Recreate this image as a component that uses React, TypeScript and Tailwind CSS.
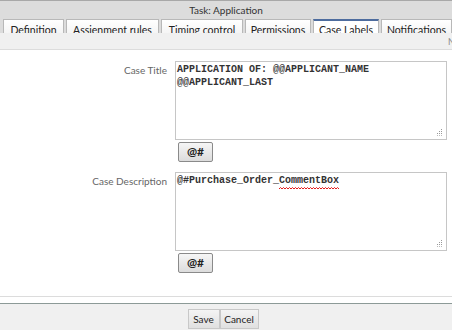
import React from "react";

const ui = { fontFamily: 'Lato, "Open Sans", sans-serif' };
const mono = { fontFamily: '"Liberation Mono", "Courier New", monospace' };

function Grip() {
  return (
    <svg className="absolute right-[3px] bottom-[3px]" width="7" height="7" viewBox="0 0 7 7">
      <rect x="5" y="0" width="1" height="1" fill="#999" />
      <rect x="3" y="2" width="1" height="1" fill="#999" />
      <rect x="5" y="2" width="1" height="1" fill="#999" />
      <rect x="1" y="4" width="1" height="1" fill="#999" />
      <rect x="3" y="4" width="1" height="1" fill="#999" />
      <rect x="5" y="4" width="1" height="1" fill="#999" />
      <rect x="1" y="6" width="1" height="1" fill="#bbb" />
      <rect x="3" y="6" width="1" height="1" fill="#bbb" />
      <rect x="5" y="6" width="1" height="1" fill="#bbb" />
    </svg>
  );
}

function Squiggle() {
  return (
    <svg className="absolute left-[103px] top-[14px]" width="60" height="3" viewBox="0 0 60 3">
      <polyline
        points="0,2 1.5,0.5 3,2 4.5,0.5 6,2 7.5,0.5 9,2 10.5,0.5 12,2 13.5,0.5 15,2 16.5,0.5 18,2 19.5,0.5 21,2 22.5,0.5 24,2 25.5,0.5 27,2 28.5,0.5 30,2 31.5,0.5 33,2 34.5,0.5 36,2 37.5,0.5 39,2 40.5,0.5 42,2 43.5,0.5 45,2 46.5,0.5 48,2 49.5,0.5 51,2 52.5,0.5 54,2 55.5,0.5 57,2 58.5,0.5 60,2"
        fill="none"
        stroke="#e00000"
        strokeWidth="0.9"
      />
    </svg>
  );
}

function AtButton() {
  return (
    <button
      className="ml-[3px] mt-[2px] w-[35px] h-[20px] rounded-[2px] border border-[#8a8a8a] bg-gradient-to-b from-[#f6f6f6] to-[#dcdcdc] text-[12px] font-bold text-[#222] leading-none flex items-center justify-center"
      style={ui}
    >
      @#
    </button>
  );
}

const tabs = [
  { label: "Definition", w: "w-[61px]" },
  { label: "Assienment rules", w: "w-[93px]" },
  { label: "Timing control", w: "w-[82px]" },
  { label: "Permissions", w: "w-[66px]" },
  { label: "Case Labels", w: "w-[66px]", active: true },
  { label: "Notifications", w: "w-[71px]" },
];

export default function App() {
  return (
    <div className="w-[452px] h-[330px] bg-white flex flex-col overflow-hidden" style={ui}>
      {/* Title + tabs */}
      <div className="bg-[#dcdcdc] border-t border-[#a8a8a8]">
        <div className="h-[18px] flex items-center justify-center text-[10px] text-[#333]">
          Task: Application
        </div>
        <div className="h-[14px] overflow-hidden flex gap-[2px] pl-[3px]">
          {tabs.map((t) => (
            <div
              key={t.label}
              className={`${t.w} shrink-0 h-[20px] border-x border-[#b8b8b8] ${
                t.active
                  ? "border-t-2 border-t-[#4d6c9e] bg-white pt-[3px]"
                  : "border-t border-t-[#b8b8b8] bg-gradient-to-b from-white to-[#f0f0f0] pt-[4px]"
              } text-center text-[10.5px] leading-[13px] text-[#222] whitespace-nowrap`}
            >
              {t.label}
            </div>
          ))}
        </div>
      </div>
      <div className="relative h-[17px] bg-[#f0f0f0] border-b border-[#dcdcdc]">
        <span className="absolute left-[448px] top-[2px] text-[9px] text-[#888]">N</span>
      </div>

      {/* Content */}
      <div className="flex-1 flex flex-col pt-[11px]">
        <div className="flex">
          <div className="w-[167px] shrink-0 text-right text-[10px] text-[#666] pt-[2px]">Case Title</div>
          <div className="ml-[8px] flex flex-col items-start">
            <div
              className="relative w-[272px] h-[79px] border border-[#c6c6c6] pl-[1px] pt-[2px] text-[10px] leading-[12.5px] font-bold text-[#333]"
              style={mono}
            >
              <div>APPLICATION OF: @@APPLICANT_NAME</div>
              <div>@@APPLICANT_LAST</div>
              <Grip />
            </div>
            <AtButton />
          </div>
        </div>
        <div className="flex mt-[10px]">
          <div className="w-[167px] shrink-0 text-right text-[10px] text-[#666] pt-[2px]">Case Description</div>
          <div className="ml-[8px] flex flex-col items-start">
            <div
              className="relative w-[272px] h-[79px] border border-[#c6c6c6] pl-[1px] pt-[2px] text-[10px] leading-[12.5px] font-bold text-[#333]"
              style={mono}
            >
              <div>
                <span>@#Purchase_Order_</span>
                <span>CommentBox</span>
              </div>
              <Squiggle />
              <Grip />
            </div>
            <AtButton />
          </div>
        </div>
      </div>

      {/* Footer */}
      <div className="h-[1px] bg-[#dcdcdc]" />
      <div className="h-[6px]" />
      <div className="h-[1px] bg-[#8c9a97]" />
      <div className="h-[26px] bg-[#f0f0f0] flex justify-center items-start pt-[5px] pr-[6px]">
        <button className="h-[20px] w-[32px] border border-[#c8c8c8] bg-gradient-to-b from-[#f4f4f4] to-[#e0e0e0] text-[10px] text-[#222]">
          Save
        </button>
        <button className="h-[20px] w-[39px] border border-[#c8c8c8] bg-gradient-to-b from-[#f4f4f4] to-[#e0e0e0] text-[10px] text-[#222]">
          Cancel
        </button>
      </div>
    </div>
  );
}
